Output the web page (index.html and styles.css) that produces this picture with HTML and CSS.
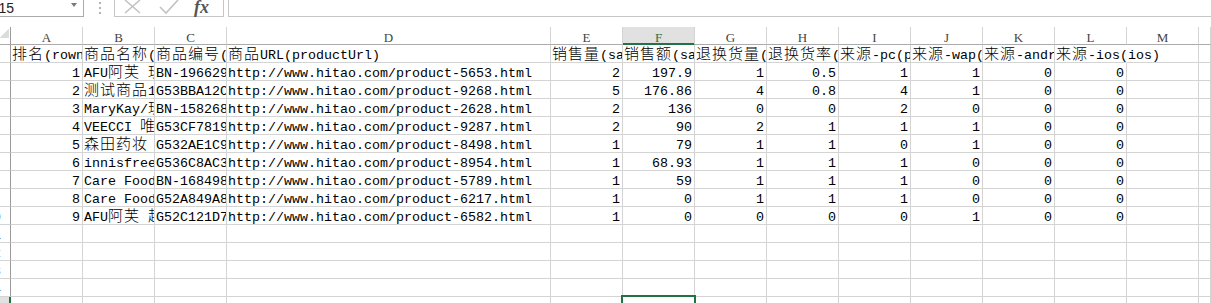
FILE: index.html
```html
<!DOCTYPE html>
<html lang="zh-CN">
<head>
<meta charset="utf-8">
<title>Sheet</title>
<link rel="stylesheet" href="styles.css">
</head>
<body>
<div class="bar">
  <div class="namebox"><span class="ref">F15</span><span class="arrow"></span></div>
  <div class="grip"></div>
  <div class="fbtns">
    <svg class="ico-x" width="17" height="15" viewBox="0 0 17 15"><path d="M1 0 L16 13 M16 0 L1 13" stroke="#c2c2c2" stroke-width="1.6" fill="none"/></svg>
    <svg class="ico-ok" width="20" height="15" viewBox="0 0 20 15"><path d="M1 7 L7 13 L19 0" stroke="#c2c2c2" stroke-width="1.6" fill="none"/></svg>
    <span class="fx">fx</span>
  </div>
  <div class="finput"></div>
</div>

<div class="sheet">
  <!-- column headers -->
  <div class="c corner"></div>
  <div class="c ch">A</div><div class="c ch">B</div><div class="c ch">C</div><div class="c ch">D</div>
  <div class="c ch">E</div><div class="c ch on">F</div><div class="c ch">G</div><div class="c ch">H</div>
  <div class="c ch">I</div><div class="c ch">J</div><div class="c ch">K</div><div class="c ch">L</div>
  <div class="c ch">M</div><div class="c ch"></div>

  <!-- row 1 -->
  <div class="c rh"><span>1</span></div>
  <div class="c"><span class="k">排名</span>(rownum)</div>
  <div class="c"><span class="k">商品名称</span>(productName)</div>
  <div class="c"><span class="k">商品编号</span>(productCode)</div>
  <div class="c"><span class="k">商品</span>URL(productUrl)</div>
  <div class="c"><span class="k">销售量</span>(saleCount)</div>
  <div class="c"><span class="k">销售额</span>(saleAmount)</div>
  <div class="c"><span class="k">退换货量</span>(returnCount)</div>
  <div class="c"><span class="k">退换货率</span>(returnRate)</div>
  <div class="c"><span class="k">来源</span>-pc(pc)</div>
  <div class="c"><span class="k">来源</span>-wap(wap)</div>
  <div class="c"><span class="k">来源</span>-android(android)</div>
  <div class="c ov"><span class="k">来源</span>-ios(ios)</div>
  <div class="c"></div><div class="c"></div>

  <!-- row 2 -->
  <div class="c rh"><span>2</span></div>
  <div class="c n">1</div>
  <div class="c">AFU<span class="k">阿芙</span> <span class="k">玫瑰精油</span></div>
  <div class="c">BN-1966298</div>
  <div class="c">http://www.hitao.com/product-5653.html</div>
  <div class="c n">2</div><div class="c n">197.9</div><div class="c n">1</div><div class="c n">0.5</div>
  <div class="c n">1</div><div class="c n">1</div><div class="c n">0</div><div class="c n">0</div>
  <div class="c"></div><div class="c"></div>

  <!-- row 3 -->
  <div class="c rh"><span>3</span></div>
  <div class="c n">2</div>
  <div class="c"><span class="k">测试商品</span>12</div>
  <div class="c">G53BBA12C4</div>
  <div class="c">http://www.hitao.com/product-9268.html</div>
  <div class="c n">5</div><div class="c n">176.86</div><div class="c n">4</div><div class="c n">0.8</div>
  <div class="c n">4</div><div class="c n">1</div><div class="c n">0</div><div class="c n">0</div>
  <div class="c"></div><div class="c"></div>

  <!-- row 4 -->
  <div class="c rh"><span>4</span></div>
  <div class="c n">3</div>
  <div class="c">MaryKay/<span class="k">玫琳凯</span></div>
  <div class="c">BN-1582688</div>
  <div class="c">http://www.hitao.com/product-2628.html</div>
  <div class="c n">2</div><div class="c n">136</div><div class="c n">0</div><div class="c n">0</div>
  <div class="c n">2</div><div class="c n">0</div><div class="c n">0</div><div class="c n">0</div>
  <div class="c"></div><div class="c"></div>

  <!-- row 5 -->
  <div class="c rh"><span>5</span></div>
  <div class="c n">4</div>
  <div class="c">VEECCI <span class="k">唯资</span></div>
  <div class="c">G53CF78193</div>
  <div class="c">http://www.hitao.com/product-9287.html</div>
  <div class="c n">2</div><div class="c n">90</div><div class="c n">2</div><div class="c n">1</div>
  <div class="c n">1</div><div class="c n">1</div><div class="c n">0</div><div class="c n">0</div>
  <div class="c"></div><div class="c"></div>

  <!-- row 6 -->
  <div class="c rh"><span>6</span></div>
  <div class="c n">5</div>
  <div class="c"><span class="k">森田药妆</span> <span class="k">玻尿酸</span></div>
  <div class="c">G532AE1C95</div>
  <div class="c">http://www.hitao.com/product-8498.html</div>
  <div class="c n">1</div><div class="c n">79</div><div class="c n">1</div><div class="c n">1</div>
  <div class="c n">0</div><div class="c n">1</div><div class="c n">0</div><div class="c n">0</div>
  <div class="c"></div><div class="c"></div>

  <!-- row 7 -->
  <div class="c rh"><span>7</span></div>
  <div class="c n">6</div>
  <div class="c">innisfree<span class="k">悦诗风吟</span></div>
  <div class="c">G536C8AC37</div>
  <div class="c">http://www.hitao.com/product-8954.html</div>
  <div class="c n">1</div><div class="c n">68.93</div><div class="c n">1</div><div class="c n">1</div>
  <div class="c n">1</div><div class="c n">0</div><div class="c n">0</div><div class="c n">0</div>
  <div class="c"></div><div class="c"></div>

  <!-- row 8 -->
  <div class="c rh"><span>8</span></div>
  <div class="c n">7</div>
  <div class="c">Care Food <span class="k">宠物食品</span></div>
  <div class="c">BN-1684987</div>
  <div class="c">http://www.hitao.com/product-5789.html</div>
  <div class="c n">1</div><div class="c n">59</div><div class="c n">1</div><div class="c n">1</div>
  <div class="c n">1</div><div class="c n">0</div><div class="c n">0</div><div class="c n">0</div>
  <div class="c"></div><div class="c"></div>

  <!-- row 9 -->
  <div class="c rh"><span>9</span></div>
  <div class="c n">8</div>
  <div class="c">Care Food <span class="k">猫粮</span></div>
  <div class="c">G52A849A82</div>
  <div class="c">http://www.hitao.com/product-6217.html</div>
  <div class="c n">1</div><div class="c n">0</div><div class="c n">1</div><div class="c n">1</div>
  <div class="c n">1</div><div class="c n">0</div><div class="c n">0</div><div class="c n">0</div>
  <div class="c"></div><div class="c"></div>

  <!-- row 10 -->
  <div class="c rh"><span>10</span></div>
  <div class="c n">9</div>
  <div class="c">AFU<span class="k">阿芙</span> <span class="k">超值套装</span></div>
  <div class="c">G52C121D74</div>
  <div class="c">http://www.hitao.com/product-6582.html</div>
  <div class="c n">1</div><div class="c n">0</div><div class="c n">0</div><div class="c n">0</div>
  <div class="c n">0</div><div class="c n">1</div><div class="c n">0</div><div class="c n">0</div>
  <div class="c"></div><div class="c"></div>

  <!-- row 11 -->
  <div class="c rh"><span>11</span></div>
  <div class="c"></div><div class="c"></div><div class="c"></div><div class="c"></div>
  <div class="c"></div><div class="c"></div><div class="c"></div><div class="c"></div>
  <div class="c"></div><div class="c"></div><div class="c"></div><div class="c"></div>
  <div class="c"></div><div class="c"></div>

  <!-- row 12 -->
  <div class="c rh"><span>12</span></div>
  <div class="c"></div><div class="c"></div><div class="c"></div><div class="c"></div>
  <div class="c"></div><div class="c"></div><div class="c"></div><div class="c"></div>
  <div class="c"></div><div class="c"></div><div class="c"></div><div class="c"></div>
  <div class="c"></div><div class="c"></div>

  <!-- row 13 -->
  <div class="c rh"><span>13</span></div>
  <div class="c"></div><div class="c"></div><div class="c"></div><div class="c"></div>
  <div class="c"></div><div class="c"></div><div class="c"></div><div class="c"></div>
  <div class="c"></div><div class="c"></div><div class="c"></div><div class="c"></div>
  <div class="c"></div><div class="c"></div>

  <!-- row 14 -->
  <div class="c rh"><span>14</span></div>
  <div class="c"></div><div class="c"></div><div class="c"></div><div class="c"></div>
  <div class="c"></div><div class="c"></div><div class="c"></div><div class="c"></div>
  <div class="c"></div><div class="c"></div><div class="c"></div><div class="c"></div>
  <div class="c"></div><div class="c"></div>

  <!-- row 15 (selected F15) -->
  <div class="c rh on"><span>15</span></div>
  <div class="c"></div><div class="c"></div><div class="c"></div><div class="c"></div>
  <div class="c"></div><div class="c cur"><div class="sel"></div></div><div class="c"></div><div class="c"></div>
  <div class="c"></div><div class="c"></div><div class="c"></div><div class="c"></div>
  <div class="c"></div><div class="c"></div>
</div>
</body>
</html>
```

FILE: styles.css
```css
html, body {
  margin: 0;
  padding: 0;
  background: #fff;
}

body {
  width: 1211px;
  height: 303px;
  overflow: hidden;
  font-family: "Liberation Mono", "Noto Sans CJK SC", monospace;
  color: #000;
}

/* ---------- formula bar ---------- */
.bar {
  display: flex;
  height: 17px;
}

.namebox {
  box-sizing: border-box;
  width: 84px;
  height: 17px;
  border-right: 1px solid #ababab;
  border-bottom: 1px solid #ababab;
  display: flex;
  align-items: flex-start;
  justify-content: space-between;
  padding-right: 6px;
  font: 14px/16px "Liberation Sans", sans-serif;
  color: #222;
  overflow: hidden;
}

.namebox .ref {
  margin-left: -10px;
}

.namebox .arrow {
  width: 0;
  height: 0;
  border-left: 3.5px solid transparent;
  border-right: 3.5px solid transparent;
  border-top: 4px solid #7a7a7a;
  margin-top: 3px;
}

.grip {
  width: 2px;
  height: 13px;
  margin: 2px 13px 0 15px;
  background: linear-gradient(#b4b4b4 2px, transparent 2px) 0 0 / 2px 5px repeat-y;
}

.fbtns {
  box-sizing: border-box;
  width: 110px;
  height: 17px;
  border: 1px solid #c6c6c6;
  border-top: 0;
  display: flex;
  align-items: flex-start;
  padding-left: 9px;
}

.ico-x {
  display: block;
}

.ico-ok {
  display: block;
  margin-left: 18px;
}

.fx {
  margin-left: 15px;
  font: italic bold 18px/14px "Liberation Serif", serif;
  color: #555;
}

.finput {
  flex: 1;
  margin-left: 4px;
  height: 17px;
  box-sizing: border-box;
  border-left: 1px solid #c6c6c6;
  border-bottom: 1px solid #c6c6c6;
}

/* ---------- grid ---------- */
.sheet {
  margin-top: 10px;
  display: grid;
  grid-template-columns: 11px 72px 72px 72px 324px repeat(9, 72px) 12px;
  grid-auto-rows: 18px;
}

.c {
  box-sizing: border-box;
  border-right: 1px solid #d4d4d4;
  border-bottom: 1px solid #d4d4d4;
  overflow: hidden;
  white-space: nowrap;
  font-size: 13.333px;
  line-height: 16px;
  padding: 3px 2px 0 1px;
}

.k {
  font-family: "Noto Sans CJK SC", sans-serif;
  font-size: 15px;
  font-weight: 300;
  letter-spacing: 1px;
  line-height: 10px;
}

.n {
  text-align: right;
}

.ov {
  overflow: visible;
  border-right-color: transparent;
}

/* column headers */
.ch {
  text-align: center;
  font: 13px/15px "Liberation Serif", serif;
  color: #444;
  padding: 3px 0 0;
  border-bottom-color: #ababab;
}

.ch.on {
  background: #e1e1e1;
  color: #217346;
  border-bottom-color: #217346;
  box-shadow: inset 0 -1px 0 #217346;
}

.corner {
  padding: 0;
  border-right-color: #9b9b9b;
  border-bottom-color: #ababab;
  background: linear-gradient(to bottom right, transparent 50%, #dcdcdc 50%) no-repeat 0 1px / 9px 10px;
}

/* row headers (mostly cropped off) */
.rh {
  padding: 3px 0 0;
  color: #444;
  border-right-color: #9b9b9b;
}

.rh span {
  display: block;
  width: 30px;
  margin-left: -22px;
  text-align: center;
}

.rh.on {
  background: #e1e1e1;
  color: #217346;
  border-right-color: #217346;
  box-shadow: inset -1px 0 0 #217346;
}

/* selected cell */
.cur {
  position: relative;
  overflow: visible;
}

.sel {
  position: absolute;
  left: -2px;
  top: -2px;
  right: -2px;
  height: 20px;
  box-sizing: border-box;
  border: 2px solid #217346;
}
```
